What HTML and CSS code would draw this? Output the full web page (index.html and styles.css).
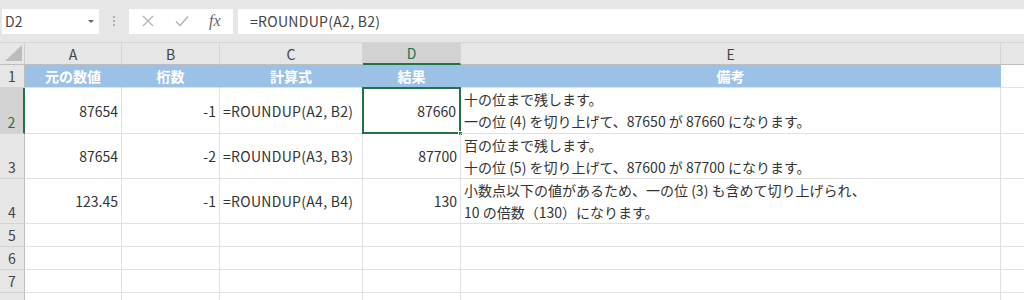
FILE: index.html
```html
<!DOCTYPE html>
<html lang="ja">
<head>
    <meta charset="UTF-8">
    <meta name="viewport" content="width=device-width, initial-scale=1.0">
    <title>ROUNDUP</title>
    <link rel="stylesheet" href="styles.css">
</head>
<body>
    <div class="toolbar">
        <div class="name-box">
            <span>D2</span>
            <span class="drop"></span>
        </div>
        <div class="grip">
            <span></span><span></span><span></span>
        </div>
        <div class="fx-buttons">
            <svg class="icon" width="14" height="14" viewBox="0 0 14 14">
                <path d="M2 2 L12 12 M12 2 L2 12" stroke="#b5b5b5" stroke-width="1.4" fill="none"/>
            </svg>
            <svg class="icon" width="16" height="14" viewBox="0 0 16 14">
                <path d="M2 7.5 L6 11.5 L14 2.5" stroke="#b5b5b5" stroke-width="1.5" fill="none"/>
            </svg>
            <span class="fx">fx</span>
        </div>
        <div class="formula">=ROUNDUP(A2, B2)</div>
    </div>

    <div class="sheet">
        <!-- column headers -->
        <div class="corner"><span class="tri"></span></div>
        <div class="col-head">A</div>
        <div class="col-head">B</div>
        <div class="col-head">C</div>
        <div class="col-head active">D</div>
        <div class="col-head">E</div>
        <div class="col-head"></div>

        <!-- row 1 -->
        <div class="row-head">1</div>
        <div class="cell title">元の数値</div>
        <div class="cell title">桁数</div>
        <div class="cell title">計算式</div>
        <div class="cell title">結果</div>
        <div class="cell title">備考</div>
        <div class="cell"></div>

        <!-- row 2 -->
        <div class="row-head tall active">2</div>
        <div class="cell num">87654</div>
        <div class="cell num">-1</div>
        <div class="cell text">=ROUNDUP(A2, B2)</div>
        <div class="cell num selected">87660<span class="handle"></span></div>
        <div class="cell note">十の位まで残します。<br>一の位 (4) を切り上げて、87650 が 87660 になります。</div>
        <div class="cell"></div>

        <!-- row 3 -->
        <div class="row-head tall">3</div>
        <div class="cell num">87654</div>
        <div class="cell num">-2</div>
        <div class="cell text">=ROUNDUP(A3, B3)</div>
        <div class="cell num">87700</div>
        <div class="cell note">百の位まで残します。<br>十の位 (5) を切り上げて、87600 が 87700 になります。</div>
        <div class="cell"></div>

        <!-- row 4 -->
        <div class="row-head tall">4</div>
        <div class="cell num">123.45</div>
        <div class="cell num">-1</div>
        <div class="cell text">=ROUNDUP(A4, B4)</div>
        <div class="cell num">130</div>
        <div class="cell note">小数点以下の値があるため、一の位 (3) も含めて切り上げられ、<br>10 の倍数（130）になります。</div>
        <div class="cell"></div>

        <!-- empty rows -->
        <div class="row-head">5</div>
        <div class="cell"></div><div class="cell"></div><div class="cell"></div><div class="cell"></div><div class="cell"></div><div class="cell"></div>
        <div class="row-head">6</div>
        <div class="cell"></div><div class="cell"></div><div class="cell"></div><div class="cell"></div><div class="cell"></div><div class="cell"></div>
        <div class="row-head">7</div>
        <div class="cell"></div><div class="cell"></div><div class="cell"></div><div class="cell"></div><div class="cell"></div><div class="cell"></div>
        <div class="row-head"></div>
        <div class="cell"></div><div class="cell"></div><div class="cell"></div><div class="cell"></div><div class="cell"></div><div class="cell"></div>
    </div>
</body>
</html>
```

FILE: styles.css
```css
* {
    box-sizing: border-box;
}

body {
    margin: 0;
    width: 1024px;
    height: 300px;
    overflow: hidden;
    font-family: "Noto Sans CJK JP", "Noto Sans", sans-serif;
    font-size: 13px;
    color: #333;
    background: #fff;
}

/* formula bar */
.toolbar {
    display: flex;
    align-items: center;
    height: 43px;
    padding-left: 2px;
    background: #e6e6e6;
    border-bottom: 1px solid #d6d6d6;
}

.name-box {
    display: flex;
    align-items: center;
    justify-content: space-between;
    width: 97px;
    height: 25px;
    padding: 0 5px 0 3px;
    background: #fff;
    font-size: 14px;
    color: #444;
}

.drop {
    width: 0;
    height: 0;
    border-left: 3px solid transparent;
    border-right: 3px solid transparent;
    border-top: 3px solid #666;
}

.grip {
    display: flex;
    flex-direction: column;
    gap: 2px;
    width: 30px;
    align-items: center;
}

.grip span {
    width: 2px;
    height: 2px;
    background: #b0b0b0;
}

.fx-buttons {
    display: flex;
    align-items: center;
    width: 104px;
    height: 25px;
    padding-left: 12px;
    gap: 19px;
    background: #fff;
}

.fx {
    font-family: "Liberation Serif", serif;
    font-style: italic;
    font-size: 16px;
    color: #666;
}

.formula {
    flex: 1;
    height: 25px;
    margin-left: 5px;
    padding-left: 12px;
    line-height: 25px;
    background: #fff;
    font-size: 14px;
    letter-spacing: 0.3px;
    color: #444;
}

/* grid */
.sheet {
    display: grid;
    grid-template-columns: 25px 97px 98px 143px 98px 540px 40px;
    grid-template-rows: 22px 23px 46px 45px 45px 23px 23px 23px 23px;
}

.corner {
    position: relative;
    background: #e6e6e6;
    border-right: 1px solid #cfcfcf;
    border-bottom: 1px solid #bdbdbd;
}

.tri {
    position: absolute;
    right: 2px;
    bottom: 3px;
    width: 0;
    height: 0;
    border-left: 17px solid transparent;
    border-bottom: 16px solid #bcbcbc;
}

.col-head {
    display: flex;
    align-items: center;
    justify-content: center;
    background: #e6e6e6;
    border-right: 1px solid #d4d4d4;
    border-bottom: 1px solid #bdbdbd;
    font-size: 14px;
    color: #444;
}

.col-head.active {
    background: #d2d2d2;
    color: #217346;
    border-bottom: 2px solid #217346;
}

.row-head {
    display: flex;
    align-items: center;
    justify-content: center;
    background: #e6e6e6;
    border-right: 1px solid #bdbdbd;
    border-bottom: 1px solid #d4d4d4;
    font-size: 14px;
    color: #444;
}

.row-head.tall {
    align-items: flex-end;
    padding-bottom: 1px;
}

.row-head.active {
    background: #d2d2d2;
    color: #217346;
    border-right: 2px solid #217346;
}

.cell {
    position: relative;
    display: flex;
    align-items: center;
    padding: 0 3px;
    border-right: 1px solid #e1e1e1;
    border-bottom: 1px solid #e1e1e1;
    white-space: nowrap;
    font-size: 14px;
}

.text {
    letter-spacing: 0.3px;
}

.title {
    justify-content: center;
    background: #9bc2e6;
    border-right-color: #9bc2e6;
    border-bottom-color: #e1e1e1;
    color: #fff;
    font-weight: bold;
}

.num {
    justify-content: flex-end;
}

.note {
    align-items: flex-start;
    padding-top: 0;
    line-height: 22px;
}

.selected {
    border: 2px solid #217346;
    margin: -1px 0 0 -1px;
}

.handle {
    position: absolute;
    right: -4px;
    bottom: -4px;
    width: 5px;
    height: 5px;
    background: #217346;
    border: 1px solid #fff;
}
```
